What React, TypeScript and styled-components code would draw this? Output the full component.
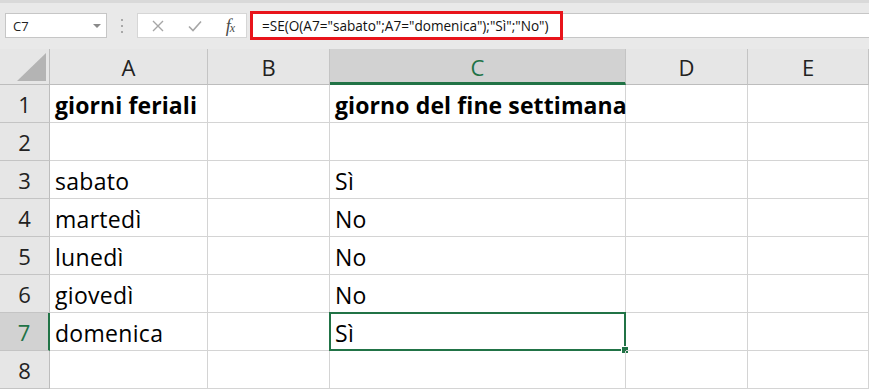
import { FC, Fragment } from "react";
import styled, { createGlobalStyle } from "styled-components";

const GlobalStyle = createGlobalStyle`
  html, body {
    margin: 0;
    padding: 0;
    background: #ffffff;
    overflow: hidden;
  }
  * {
    box-sizing: border-box;
  }
`;

const green = "#217346";
const gridLine = "#d4d4d4";
const headerBg = "#e6e6e6";
const headerSelected = "#d2d2d2";

const Wrapper = styled.div`
  width: 869px;
  height: 390px;
  display: flex;
  flex-direction: column;
  background: #ffffff;
  overflow: hidden;
`;

const Toolbar = styled.div`
  display: flex;
  align-items: flex-start;
  height: 49px;
  padding: 10px 0 0 5px;
  background: #e9e9e9;
  border-top: 3px solid #d9d9d9;
`;

const NameBox = styled.div`
  display: flex;
  align-items: center;
  justify-content: space-between;
  width: 102px;
  height: 25px;
  padding: 0 5px 0 7px;
  background: #ffffff;
  border: 1px solid #c6c6c6;
  font-family: "Segoe UI", "Open Sans", "Liberation Sans", sans-serif;
  font-size: 13px;
  color: #222;
`;

const Caret = styled.span`
  width: 0;
  height: 0;
  border-left: 4px solid transparent;
  border-right: 4px solid transparent;
  border-top: 4px solid #8a8a8a;
`;

const Grip = styled.div`
  display: flex;
  flex-direction: column;
  justify-content: center;
  gap: 4px;
  width: 30px;
  height: 25px;
  align-items: center;
`;

const GripDot = styled.span`
  width: 2px;
  height: 2px;
  background: #a8a8a8;
`;

const FxButtons = styled.div`
  display: flex;
  align-items: center;
  width: 110px;
  height: 25px;
  padding: 0 12px 0 14px;
  background: #ffffff;
  border: 1px solid #d6d6d6;
  justify-content: space-between;
`;

const FxLabel = styled.span`
  font-family: "Liberation Serif", "DejaVu Serif", serif;
  font-style: italic;
  font-size: 18px;
  line-height: 1;
  color: #4a4a4a;
  letter-spacing: -1px;

  sub {
    font-size: 12px;
    vertical-align: 0;
  }
`;

const FormulaInput = styled.div`
  flex: 1;
  display: flex;
  align-items: center;
  height: 25px;
  margin-left: 3px;
  background: #ffffff;
  border-top: 1px solid #c6c6c6;
  border-bottom: 1px solid #c6c6c6;
`;

const Highlight = styled.span`
  display: flex;
  align-items: center;
  height: 29px;
  width: 313px;
  margin-top: -1px;
  padding-left: 9px;
  border: 3px solid #e8141b;
  font-family: "Segoe UI", "Open Sans", "Liberation Sans", sans-serif;
  font-size: 13.6px;
  color: #111;
  white-space: nowrap;
`;

const Sheet = styled.div`
  display: grid;
  grid-template-columns: 50px 158px 122px 296px 122px 121px;
  grid-template-rows: 36px repeat(8, 38px);
  font-family: "Open Sans", "Lato", sans-serif;
  font-size: 22px;
  color: #000;
`;

const Corner = styled.div`
  display: flex;
  align-items: flex-end;
  justify-content: flex-end;
  padding: 0 3px 3px 0;
  background: ${headerBg};
  border-right: 1px solid #bdbdbd;
  border-bottom: 1px solid #bdbdbd;
`;

const ColHeader = styled.div<{ $active?: boolean }>`
  display: flex;
  align-items: center;
  justify-content: center;
  background: ${(p) => (p.$active ? headerSelected : headerBg)};
  color: ${(p) => (p.$active ? green : "#222")};
  border-right: 1px solid #c4c4c4;
  border-bottom: ${(p) => (p.$active ? `3px solid ${green}` : "1px solid #bdbdbd")};
  padding-top: ${(p) => (p.$active ? "2px" : "0")};
`;

const RowHeader = styled.div<{ $active?: boolean }>`
  display: flex;
  align-items: center;
  justify-content: center;
  background: ${(p) => (p.$active ? headerSelected : headerBg)};
  color: ${(p) => (p.$active ? green : "#222")};
  border-right: ${(p) => (p.$active ? `2px solid ${green}` : "1px solid #bdbdbd")};
  border-bottom: 1px solid #c4c4c4;
`;

const Cell = styled.div<{ $bold?: boolean; $selected?: boolean }>`
  position: relative;
  display: flex;
  align-items: center;
  padding: 2px 0 0 5px;
  white-space: nowrap;
  font-size: 23px;
  letter-spacing: ${(p) => (p.$bold ? "0.1px" : "0.3px")};
  font-weight: ${(p) => (p.$bold ? 700 : 400)};
  border-right: 1px solid ${gridLine};
  border-bottom: 1px solid ${gridLine};
  ${(p) =>
    p.$selected &&
    `
    border: 2px solid ${green};
    margin: -1px 0 0 -1px;
    padding-left: 4px;
  `}
`;

const FillHandle = styled.span`
  position: absolute;
  right: -4px;
  bottom: -4px;
  width: 6px;
  height: 6px;
  background: ${green};
  border: 1px solid #ffffff;
  box-sizing: content-box;
  margin: -1px;
`;

const columns = ["A", "B", "C", "D", "E"];

const rows: string[][] = [
  ["giorni feriali", "", "giorno del fine settimana", "", ""],
  ["", "", "", "", ""],
  ["sabato", "", "Sì", "", ""],
  ["martedì", "", "No", "", ""],
  ["lunedì", "", "No", "", ""],
  ["giovedì", "", "No", "", ""],
  ["domenica", "", "Sì", "", ""],
  ["", "", "", "", ""],
];

const CancelIcon: FC = () => (
  <svg width="12" height="12" viewBox="0 0 12 12">
    <path d="M1 1 L11 11 M11 1 L1 11" stroke="#a6a6a6" strokeWidth="1.4" fill="none" />
  </svg>
);

const EnterIcon: FC = () => (
  <svg width="14" height="12" viewBox="0 0 14 12">
    <path d="M1 6.5 L5 10.5 L13 1.5" stroke="#a6a6a6" strokeWidth="1.6" fill="none" />
  </svg>
);

const CornerTriangle: FC = () => (
  <svg width="29" height="28" viewBox="0 0 29 28">
    <polygon points="29,0 29,28 0,28" fill="#b4b4b4" />
  </svg>
);

const App: FC = () => {
  return (
    <Wrapper>
      <GlobalStyle />
      <Toolbar>
        <NameBox>
          <span>C7</span>
          <Caret />
        </NameBox>
        <Grip>
          <GripDot />
          <GripDot />
          <GripDot />
        </Grip>
        <FxButtons>
          <CancelIcon />
          <EnterIcon />
          <FxLabel>
            f<sub>x</sub>
          </FxLabel>
        </FxButtons>
        <FormulaInput>
          <Highlight>=SE(O(A7="sabato";A7="domenica");"Sì";"No")</Highlight>
        </FormulaInput>
      </Toolbar>
      <Sheet>
        <Corner>
          <CornerTriangle />
        </Corner>
        {columns.map((c) => (
          <ColHeader key={c} $active={c === "C"}>
            {c}
          </ColHeader>
        ))}
        {rows.map((row, i) => (
          <Fragment key={i}>
            <RowHeader $active={i === 6}>{i + 1}</RowHeader>
            {row.map((value, j) => {
              const selected = i === 6 && j === 2;
              return (
                <Cell key={j} $bold={i === 0} $selected={selected}>
                  {value}
                  {selected && <FillHandle />}
                </Cell>
              );
            })}
          </Fragment>
        ))}
      </Sheet>
    </Wrapper>
  );
};

export default App;
